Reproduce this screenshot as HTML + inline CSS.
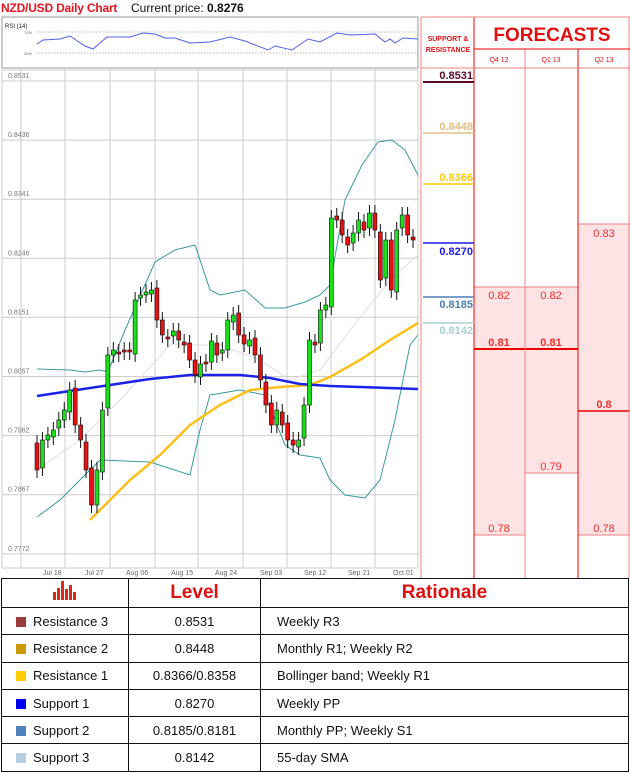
<!DOCTYPE html>
<html><head><meta charset="utf-8"><style>
*{margin:0;padding:0;box-sizing:border-box}
body{width:630px;height:773px;background:#fff;font-family:"Liberation Sans",sans-serif;position:relative;overflow:hidden}
.abs{position:absolute}
table{position:absolute;left:1px;top:578px;width:628px;border-collapse:collapse;font-size:13px;color:#111}
td{border:1.5px solid #111;height:27.3px;padding:0}
.c1{width:127px;padding-left:14px}
.c2{width:132px;text-align:center}
.c3{padding-left:16px}
.sq{display:inline-block;width:10px;height:10px;margin-right:7px;vertical-align:-1px}
.hd{font-weight:bold;color:#e01010;font-size:19px;text-align:center;height:29px}
</style></head><body>
<div class="abs" style="left:1px;top:1px;font-size:12px;font-weight:bold;color:#e8141e;letter-spacing:-0.2px">NZD/USD Daily Chart</div>
<div class="abs" style="left:131px;top:1px;font-size:12px;color:#111">Current price: <b>0.8276</b></div>
<svg class="abs" style="left:0;top:0" width="630" height="578" id="sv">
<rect x="2" y="17" width="416" height="51" fill="#fff" stroke="#999"/>
<text x="5" y="28" font-size="6" font-family="Liberation Sans" fill="#222">RSI (14)</text>
<line x1="36" y1="32" x2="418" y2="32" stroke="#777" stroke-dasharray="1.5,1.5" stroke-width="0.6"/>
<line x1="36" y1="53" x2="418" y2="53" stroke="#777" stroke-dasharray="1.5,1.5" stroke-width="0.6"/>
<text x="24" y="34" font-size="4" fill="#666">70%</text><text x="24" y="55" font-size="4" fill="#666">30%</text>
<polyline fill="none" stroke="#5060ee" stroke-width="1" points="37,44 43,40 60,39 70,36 85,46 93,49 107,37 130,37 143,33 155,34 165,38 175,38 190,43 210,42 230,37 245,41 268,50 275,46 292,50 308,39 320,42 337,33 350,35 375,34 385,42 390,39 395,43 403,38 418,39"/>
<g id="grid"></g>
<polyline fill="none" stroke="#ddd" stroke-width="1" points="37,470 80,440 120,400 170,345 220,345 260,360 290,380 320,370 350,330 390,280 418,255"/>
<polyline fill="none" stroke="#3a9a9a" stroke-width="1" points="37,369 70,370 85,372 100,370 108,372 125,330 155,262 175,250 195,245 210,290 220,295 245,290 265,308 285,308 305,302 320,295 330,285 345,200 362,165 378,142 392,140 405,150 418,175"/>
<polyline fill="none" stroke="#3a9a9a" stroke-width="1" points="37,517 60,500 80,480 90,470 100,460 150,462 190,475 200,430 210,395 240,390 265,395 285,445 300,455 320,458 330,480 345,495 365,498 380,480 395,420 410,345 418,335"/>
<polyline fill="none" stroke="#fbbf1a" stroke-width="2.5" points="90,520 110,500 130,480 160,455 190,425 220,405 250,390 280,387 310,385 330,377 360,360 390,340 418,323"/>
<polyline fill="none" stroke="#1a24e8" stroke-width="2.5" points="37,396 70,391 110,385 150,379 190,375 240,375 270,378 300,384 330,386 418,389"/>
<g id="cd"></g>
<g font-size="7" fill="#666" font-family="Liberation Sans">
<text x="43" y="575">Jul 18</text><text x="85" y="575">Jul 27</text><text x="126" y="575">Aug 06</text><text x="171" y="575">Aug 15</text><text x="215" y="575">Aug 24</text><text x="260" y="575">Sep 03</text><text x="304" y="575">Sep 12</text><text x="348" y="575">Sep 21</text><text x="393" y="575">Oct 01</text></g>
<rect x="473" y="17" width="157" height="561" fill="#fff"/>
<rect x="474" y="287" width="104" height="248" fill="#fde3e3"/>
<rect x="525" y="473" width="53" height="62" fill="#fff"/>
<rect x="578" y="224" width="52" height="311" fill="#fde3e3"/>
<line x1="474" y1="287" x2="578" y2="287" stroke="#f08080"/>
<line x1="578" y1="224" x2="630" y2="224" stroke="#f08080"/>
<line x1="525" y1="473" x2="578" y2="473" stroke="#f08080"/>
<line x1="474" y1="535" x2="525" y2="535" stroke="#f08080"/>
<line x1="578" y1="535" x2="630" y2="535" stroke="#f08080"/>
<line x1="474" y1="349" x2="578" y2="349" stroke="#e00" stroke-width="2"/>
<line x1="578" y1="411" x2="630" y2="411" stroke="#e00" stroke-width="1.5"/>
<line x1="421" y1="17" x2="421" y2="578" stroke="#f08080"/>
<line x1="474" y1="17" x2="474" y2="578" stroke="#e00"/>
<line x1="525" y1="49" x2="525" y2="578" stroke="#f08080"/>
<line x1="578" y1="49" x2="578" y2="578" stroke="#e00"/>
<line x1="629" y1="17" x2="629" y2="578" stroke="#f08080"/>
<line x1="421" y1="17" x2="630" y2="17" stroke="#f08080"/>
<line x1="474" y1="49" x2="630" y2="49" stroke="#e00"/>
<line x1="421" y1="68" x2="630" y2="68" stroke="#f08080"/>
<g font-family="Liberation Sans" fill="#e01010">
<text x="448" y="41" font-size="7" font-weight="bold" text-anchor="middle">SUPPORT &amp;</text>
<text x="448" y="52" font-size="7" font-weight="bold" text-anchor="middle">RESISTANCE</text>
<text x="552" y="41" font-size="19" font-weight="bold" text-anchor="middle">FORECASTS</text>
<text x="499" y="62" font-size="7" text-anchor="middle">Q4 12</text>
<text x="551" y="62" font-size="7" text-anchor="middle">Q1 13</text>
<text x="604" y="62" font-size="7" text-anchor="middle">Q2 13</text>
<g font-size="11" text-anchor="middle" fill="#f03030">
<text x="604" y="237">0.83</text><text x="499" y="299">0.82</text><text x="551" y="299">0.82</text>
<text x="499" y="346" font-weight="bold">0.81</text><text x="551" y="346" font-weight="bold">0.81</text>
<text x="604" y="408" font-weight="bold">0.8</text><text x="551" y="470">0.79</text>
<text x="499" y="532">0.78</text><text x="604" y="532">0.78</text></g></g>
<g font-family="Liberation Sans" font-size="11" font-weight="bold" text-anchor="end">
<line x1="423" y1="82" x2="474" y2="82" stroke="#5a0a2a" stroke-width="2"/><text x="473" y="79" fill="#5a0a2a">0.8531</text>
<line x1="423" y1="133" x2="474" y2="133" stroke="#e0c080" stroke-width="1.5"/><text x="473" y="130" fill="#e0c080">0.8448</text>
<line x1="423" y1="184" x2="474" y2="184" stroke="#ffcc00" stroke-width="1.5"/><text x="473" y="181" fill="#ffcc00">0.8366</text>
<line x1="423" y1="243" x2="474" y2="243" stroke="#1a1ae8" stroke-width="1.5"/><text x="473" y="255" fill="#1a1ae8">0.8270</text>
<line x1="423" y1="297" x2="474" y2="297" stroke="#4a7fb0" stroke-width="1.5"/><text x="473" y="308" fill="#4a7fb0">0.8185</text>
<line x1="423" y1="323" x2="474" y2="323" stroke="#a8d0d0" stroke-width="1.5"/><text x="473" y="334" fill="#a8d0d0">0.8142</text>
</g>
</svg>
<table>
<tr><td class="c1 hd" style="padding-left:0"><svg width="26" height="22" viewBox="0 0 26 22"><g fill="#d42a1a"><rect x="1" y="13" width="3" height="8"/><rect x="5" y="9" width="3" height="12"/><rect x="9" y="2" width="3" height="19"/><rect x="13" y="10" width="3" height="11"/><rect x="17" y="6" width="3" height="15"/><rect x="21" y="13" width="3" height="8"/></g></svg></td><td class="c2 hd">Level</td><td class="hd" style="padding-left:0">Rationale</td></tr>
<tr><td class="c1"><span class="sq" style="background:#9a3b3b"></span>Resistance 3</td><td class="c2">0.8531</td><td class="c3">Weekly R3</td></tr>
<tr><td class="c1"><span class="sq" style="background:#cc9900"></span>Resistance 2</td><td class="c2">0.8448</td><td class="c3">Monthly R1; Weekly R2</td></tr>
<tr><td class="c1"><span class="sq" style="background:#ffcc00"></span>Resistance 1</td><td class="c2">0.8366/0.8358</td><td class="c3">Bollinger band; Weekly R1</td></tr>
<tr><td class="c1"><span class="sq" style="background:#0000ee"></span>Support 1</td><td class="c2">0.8270</td><td class="c3">Weekly PP</td></tr>
<tr><td class="c1"><span class="sq" style="background:#4f81bd"></span>Support 2</td><td class="c2">0.8185/0.8181</td><td class="c3">Monthly PP; Weekly S1</td></tr>
<tr><td class="c1"><span class="sq" style="background:#b8cce4"></span>Support 3</td><td class="c2">0.8142</td><td class="c3">55-day SMA</td></tr>
</table>
<script>
(function(){
var NS="http://www.w3.org/2000/svg";
function el(p,t,a){var e=document.createElementNS(NS,t);for(var k in a)e.setAttribute(k,a[k]);p.appendChild(e);return e;}
var g=document.getElementById("grid");
el(g,"rect",{x:2,y:70,width:416,height:498,fill:"none",stroke:"#ccc"});
var xs=[21,65,110,155,198,243,287,331,375];
xs.forEach(function(x){el(g,"line",{x1:x,y1:70,x2:x,y2:568,stroke:"#ccc"})});
var labs=["0.8531","0.8436","0.8341","0.8246","0.8151","0.8057","0.7962","0.7867","0.7772"];
labs.forEach(function(l,i){var y=81+i*59.1;el(g,"line",{x1:2,y1:y,x2:418,y2:y,stroke:"#ccc"});var t=el(g,"text",{x:8,y:y-3,"font-size":7,fill:"#777","font-family":"Liberation Sans"});t.textContent=l;});
var c=[470,440,435,430,420,410,390,425,440,470,505,470,410,355,350,352,350,352,300,295,292,290,320,335,338,331,340,345,360,375,364,362,341,355,350,320,315,335,344,340,355,380,405,425,410,425,440,445,440,405,340,345,310,305,218,220,235,245,233,220,230,213,230,280,240,290,230,215,235,240];
var cd=document.getElementById("cd");var prev=443;
for(var i=0;i<c.length;i++){var x=37+i*5.45,o=prev,cl=c[i];var tp=Math.min(o,cl),bt=Math.max(o,cl);
if(bt-tp<2)bt=tp+2;
el(cd,"line",{x1:x,y1:tp-8,x2:x,y2:bt+8,stroke:"#111","stroke-width":1});
el(cd,"rect",{x:x-2,y:tp,width:4,height:bt-tp,fill:cl<o?"#19e019":"#e81010",stroke:"#111","stroke-width":0.6});
prev=cl+(i%3-1)*2;}
})();
</script>
</body></html>
